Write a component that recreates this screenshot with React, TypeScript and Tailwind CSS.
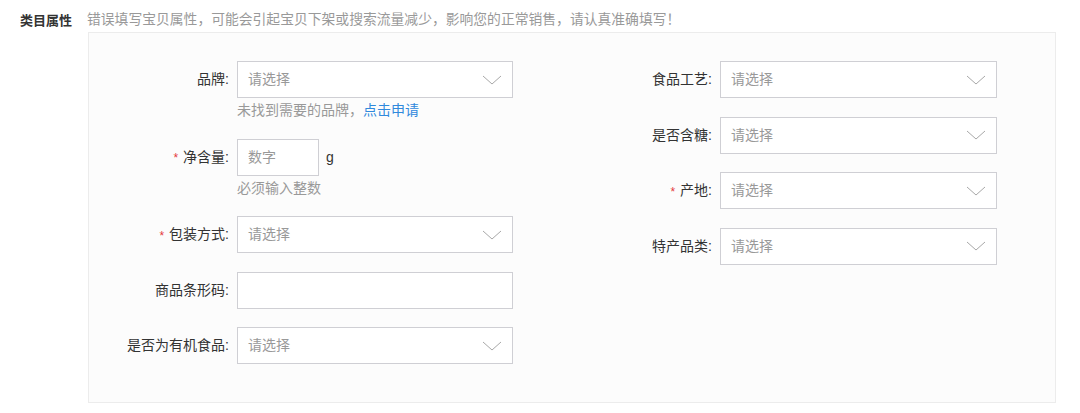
import { memo } from 'react';

const font = { fontFamily: '"Liberation Sans", "Noto Sans CJK SC", sans-serif' };

function Chevron() {
  return (
    <svg width="20" height="10" viewBox="0 0 20 10" fill="none" className="shrink-0">
      <path d="M1 1 L10 9 L19 1" stroke="#a8a8a8" strokeWidth="1" />
    </svg>
  );
}

function Label({ text, required }: { text: string; required?: boolean }) {
  return (
    <div className="w-[140px] shrink-0 h-[37px] flex items-center justify-end text-[14px] text-[#333]">
      {required && <span className="text-[#e4393c] text-[12px] mr-[5px] relative top-[1px]">*</span>}
      <span>{text}:</span>
    </div>
  );
}

function Select({ width }: { width: string }) {
  return (
    <div
      className={`${width} h-[37px] bg-white border border-[#cfcfd4] flex items-center justify-between pl-[10px] pr-[10px]`}
    >
      <span className="text-[14px] text-[#999]">请选择</span>
      <Chevron />
    </div>
  );
}

function SelectRow({ label, required, right }: { label: string; required?: boolean; right?: boolean }) {
  return (
    <div className="flex items-start gap-[8px]">
      <Label text={label} required={required} />
      <Select width={right ? 'w-[277px]' : 'w-[276px]'} />
    </div>
  );
}

function App() {
  return (
    <div className="w-[1080px] h-[413px] bg-white relative" style={font}>
      <div className="flex items-center pl-[20px] h-[40px]">
        <span className="text-[13px] font-semibold text-[#333] leading-none">类目属性</span>
        <span className="ml-[15px] text-[13.8px] text-[#999] leading-none">
          错误填写宝贝属性，可能会引起宝贝下架或搜索流量减少，影响您的正常销售，请认真准确填写！
        </span>
      </div>

      <div className="ml-[88px] mt-[-8px] w-[968px] h-[371px] bg-[#fcfcfc] border border-[#ececec] pt-[28px] flex">
        {/* left column */}
        <div className="w-[424px] flex flex-col gap-[18.5px]">
          <div>
            <SelectRow label="品牌" />
            <div className="ml-[148px] mt-[2px] leading-[20px] text-[14px] text-[#999]">
              未找到需要的品牌，<span className="text-[#3089dc]">点击申请</span>
            </div>
          </div>

          <div>
            <div className="flex items-start gap-[8px]">
              <Label text="净含量" required />
              <div className="w-[82px] h-[37px] bg-white border border-[#cfcfd4] flex items-center pl-[10px]">
                <span className="text-[14px] text-[#999]">数字</span>
              </div>
              <div className="h-[37px] flex items-center ml-[-1px] text-[14px] text-[#333]">g</div>
            </div>
            <div className="ml-[148px] mt-[2px] leading-[20px] text-[14px] text-[#999]">必须输入整数</div>
          </div>

          <SelectRow label="包装方式" required />

          <div className="flex items-start gap-[8px]">
            <Label text="商品条形码" />
            <div className="w-[276px] h-[37px] bg-white border border-[#cfcfd4]" />
          </div>

          <SelectRow label="是否为有机食品" />
        </div>

        {/* right column */}
        <div className="ml-[59px] w-[425px] flex flex-col gap-[18.5px]">
          <SelectRow label="食品工艺" right />
          <SelectRow label="是否含糖" right />
          <SelectRow label="产地" required right />
          <SelectRow label="特产品类" right />
        </div>
      </div>
    </div>
  );
}

App.displayName = 'App';
export default memo(App);
